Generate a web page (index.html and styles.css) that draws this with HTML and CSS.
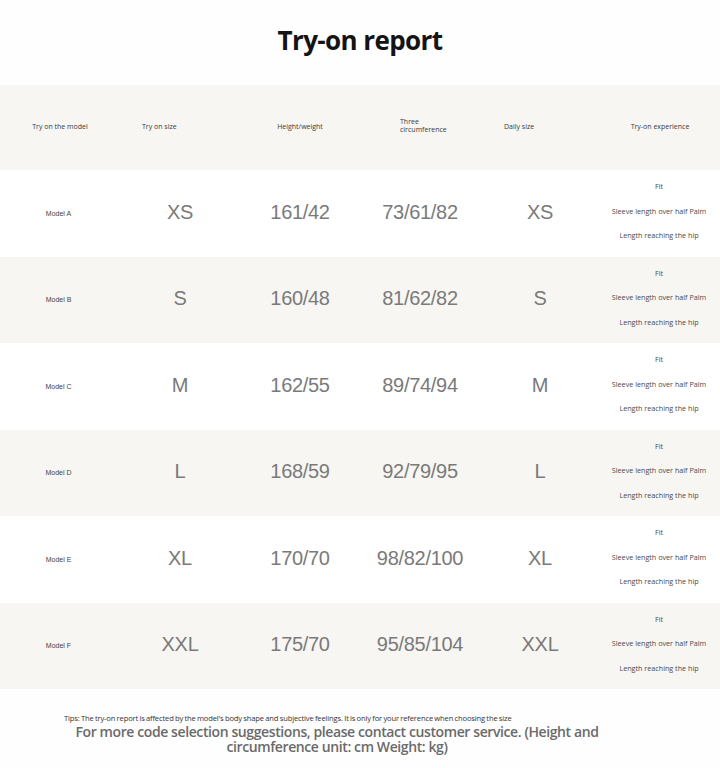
FILE: index.html
```html
<!DOCTYPE html>
<html>
<head>
<meta charset="utf-8">
<link rel="stylesheet" href="styles.css">
</head>
<body>
<div class="page">
  <h1 class="title">Try-on report</h1>
  <div class="table">
    <div class="row head">
      <div class="cell hc">Try on the model</div>
      <div class="cell hc left l22">Try on size</div>
      <div class="cell hc">Height/weight</div>
      <div class="cell hc left l40 two">Three<br>circumference</div>
      <div class="cell hc left l24">Daily size</div>
      <div class="cell hc">Try-on experience</div>
    </div>
    <div class="row">
      <div class="cell model">Model A</div>
      <div class="cell val">XS</div>
      <div class="cell val">161/42</div>
      <div class="cell val">73/61/82</div>
      <div class="cell val">XS</div>
      <div class="cell exp"><span>Fit</span><span>Sleeve length over half Palm</span><span>Length reaching the hip</span></div>
    </div>
    <div class="row alt">
      <div class="cell model">Model B</div>
      <div class="cell val">S</div>
      <div class="cell val">160/48</div>
      <div class="cell val">81/62/82</div>
      <div class="cell val">S</div>
      <div class="cell exp"><span>Fit</span><span>Sleeve length over half Palm</span><span>Length reaching the hip</span></div>
    </div>
    <div class="row">
      <div class="cell model">Model C</div>
      <div class="cell val">M</div>
      <div class="cell val">162/55</div>
      <div class="cell val">89/74/94</div>
      <div class="cell val">M</div>
      <div class="cell exp"><span>Fit</span><span>Sleeve length over half Palm</span><span>Length reaching the hip</span></div>
    </div>
    <div class="row alt">
      <div class="cell model">Model D</div>
      <div class="cell val">L</div>
      <div class="cell val">168/59</div>
      <div class="cell val">92/79/95</div>
      <div class="cell val">L</div>
      <div class="cell exp"><span>Fit</span><span>Sleeve length over half Palm</span><span>Length reaching the hip</span></div>
    </div>
    <div class="row">
      <div class="cell model">Model E</div>
      <div class="cell val">XL</div>
      <div class="cell val">170/70</div>
      <div class="cell val">98/82/100</div>
      <div class="cell val">XL</div>
      <div class="cell exp"><span>Fit</span><span>Sleeve length over half Palm</span><span>Length reaching the hip</span></div>
    </div>
    <div class="row alt">
      <div class="cell model">Model F</div>
      <div class="cell val">XXL</div>
      <div class="cell val">175/70</div>
      <div class="cell val">95/85/104</div>
      <div class="cell val">XXL</div>
      <div class="cell exp"><span>Fit</span><span>Sleeve length over half Palm</span><span>Length reaching the hip</span></div>
    </div>
  </div>
  <div class="notes">
    <p class="tips">Tips: The try-on report is affected by the model's body shape and subjective feelings. It is only for your reference when choosing the size</p>
    <p class="more">For more code selection suggestions, please contact customer service. (Height and circumference unit: cm Weight: kg)</p>
  </div>
</div>
</body>
</html>
```

FILE: styles.css
```css
html, body {
  margin: 0;
  padding: 0;
  background: #ffffff;
}
.page {
  width: 720px;
  height: 768px;
  overflow: hidden;
  background: #fefefe;
}
.title {
  margin: 0;
  height: 85px;
  display: flex;
  align-items: center;
  justify-content: center;
  font-family: "Open Sans", sans-serif;
  font-weight: 700;
  font-size: 26px;
  letter-spacing: -0.6px;
  color: #141414;
  padding-bottom: 6px;
  box-sizing: border-box;
}
.table {
  display: flex;
  flex-direction: column;
}
.row {
  display: grid;
  grid-template-columns: repeat(6, 120px);
  height: 86.5px;
  background: #ffffff;
}
.row.alt {
  background: #f8f6f3;
}
.row.head {
  height: 85px;
  background: #f7f6f3;
}
.cell {
  display: flex;
  align-items: center;
  justify-content: center;
  text-align: center;
}
.hc {
  font-family: "Open Sans", sans-serif;
  font-size: 7px;
  color: #3a3a3a;
  padding-bottom: 2px;
  box-sizing: border-box;
}
.hc.left {
  justify-content: flex-start;
  text-align: left;
}
.l22 { padding-left: 22px; }
.l40 { padding-left: 40px; }
.l24 { padding-left: 24px; }
.hc.two {
  line-height: 8px;
  padding-bottom: 4px;
}
.model {
  font-family: "Liberation Sans", Arial, sans-serif;
  font-size: 7px;
  color: #444444;
  padding-right: 3px;
  box-sizing: border-box;
}
.val {
  font-family: "Liberation Sans", Arial, sans-serif;
  font-size: 20px;
  color: #7a7a7a;
  letter-spacing: -0.3px;
  padding-bottom: 2px;
  box-sizing: border-box;
}
.exp {
  flex-direction: column;
  gap: 15.5px;
  font-family: "Open Sans", sans-serif;
  font-size: 7.2px;
  color: #4a4a4a;
  line-height: 9px;
  padding-right: 2px;
  padding-bottom: 4px;
  box-sizing: border-box;
}
.notes {
  padding: 24px 0 0 64px;
  width: 546px;
  font-family: "Open Sans", sans-serif;
}
.tips {
  margin: 0;
  font-size: 7.6px;
  letter-spacing: -0.15px;
  word-spacing: -0.5px;
  color: #333333;
  line-height: 11px;
  white-space: nowrap;
}
.more {
  margin: 0;
  text-align: center;
  font-size: 14px;
  font-weight: 600;
  letter-spacing: -0.4px;
  line-height: 15px;
  color: #6a6a6a;
}
```
